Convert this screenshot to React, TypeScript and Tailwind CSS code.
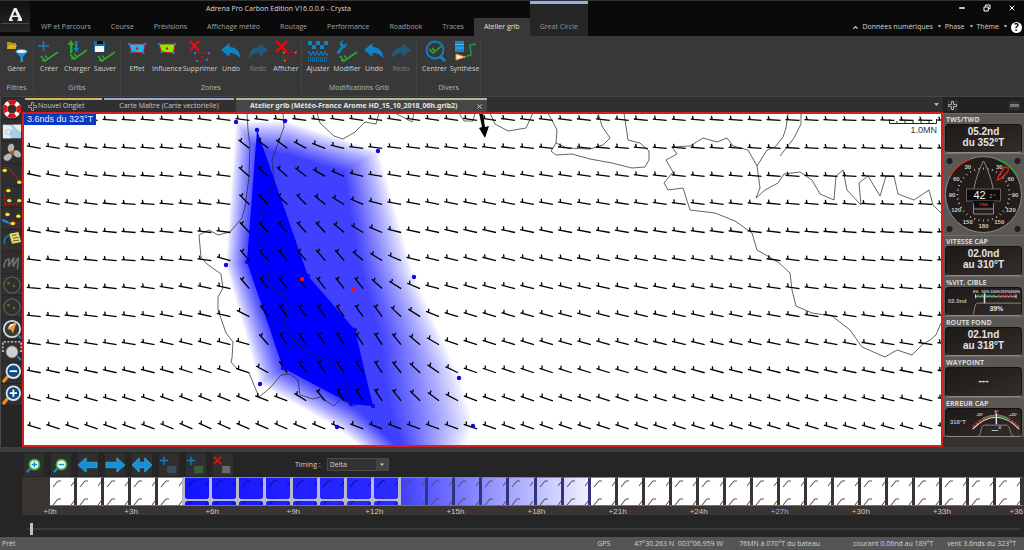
import React from "react";
import {ChevronUp, X, Minus} from "lucide-react";
import clsx from "clsx";

type Point = [number, number];

interface RibbonItem {
    label: string;
    icon: React.ReactNode;
    width: string;
    disabled?: boolean;
}

interface RibbonGroup {
    name: string;
    width: string;
    items: RibbonItem[];
}

const CheckMark = ({x = 0, y = 0}: { x?: number; y?: number }) => (
    <g transform={`translate(${x} ${y})`} fill="none" stroke="#2ea82e" strokeWidth="1.7">
        <path d="M0 4 L4 9 L17 0"/>
        <path d="M4 3.5 L7 7 M1 8.5 H5" strokeWidth="1.3"/>
    </g>
);

const Svg = ({children, size = "h-[22px] w-[22px]"}: { children: React.ReactNode; size?: string }) => (
    <svg viewBox="0 0 22 22" className={size}>{children}</svg>
);

const UndoIcon = ({flip = false}: { flip?: boolean }) => (
    <Svg>
        <g transform={flip ? "translate(22 0) scale(-1 1)" : undefined}>
            <path d="M1 10 L9.5 3 V7 C16 7 20 11 20.5 18.500 C17 14.5 14 13 9.5 13 V17 Z" fill="#0f82c8"/>
        </g>
    </Svg>
);

const ZoneIcon = ({fill}: { fill: string }) => (
    <Svg>
        <path d="M3 4 L19 4 L17.5 13 L5.5 12 Z" fill={fill} stroke="#c61c2c" strokeWidth="1"/>
        <circle cx="11" cy="8.5" r="1.2" fill="#e01010"/>
        {[[3, 4], [19, 4], [17.5, 13], [5.5, 12]].map(([x, y]) => (
            <circle key={x} cx={x} cy={y} r="1.2" fill="#1f7fc0"/>
        ))}
    </Svg>
);

const ribbonGroups: RibbonGroup[] = [
    {
        name: "Filtres", width: "w-[34px]", items: [
            {
                label: "Gérer", width: "w-[34px]", icon: (
                    <Svg>
                        <path d="M1 2 H5 L6 3 H10 V9 H1 Z" fill="#b8960c"/>
                        <path d="M1 9 L3 5 H11 L9 9 Z" fill="#d8b41c"/>
                        <path d="M10 12 L14.5 17 V22 H17 V17 L21 12 Z" fill="#2590d0"/>
                        <ellipse cx="15.5" cy="11.5" rx="5.5" ry="2" fill="#e8f4ff" stroke="#2590d0"/>
                    </Svg>
                ),
            },
        ],
    },
    {
        name: "Gribs", width: "w-[87px]", items: [
            {
                label: "Créer", width: "w-7", icon: (
                    <Svg>
                        <path d="M0 6 H11 M5.5 1 V11" stroke="#1280c4" strokeWidth="1.5"/>
                        <CheckMark x={3} y={12}/>
                    </Svg>
                ),
            },
            {
                label: "Charger", width: "w-7", icon: (
                    <Svg>
                        <path d="M4 13 V5 H1.5 L5 0 L8.5 5 H6.5 V13 Z" fill="#2ea82e"/>
                        <path d="M9 1 V8 H7.5 L10.5 13 L13 8 H11.5 V1 Z" fill="#1280c4"/>
                        <CheckMark x={4} y={10}/>
                    </Svg>
                ),
            },
            {
                label: "Sauver", width: "w-7", icon: (
                    <Svg>
                        <path d="M0 1 H9 L11 3 V12 H0 Z" fill="#1070b4"/>
                        <path d="M3 1 H9 V4 H3 Z" fill="#0a0a0a"/>
                        <path d="M1 6 H10 V12 H1 Z" fill="#f4f4f4"/>
                        <CheckMark x={4} y={12}/>
                    </Svg>
                ),
            },
        ],
    },
    {
        name: "Zones", width: "w-[181px]", items: [
            {label: "Effet", width: "w-[30px]", icon: <ZoneIcon fill="#22b4f0"/>},
            {label: "Influence", width: "w-[30px]", icon: <ZoneIcon fill="#7ef000"/>},
            {
                label: "Supprimer", width: "w-9", icon: (
                    <Svg>
                        <path d="M1 1 L10 11 M10 1 L1 11" stroke="#e80c10" strokeWidth="2"/>
                        <path d="M6 13 L20 13 L18 20 L8 21 Z" fill="none" stroke="#b01c2c" strokeDasharray="2 1"/>
                        {[[6, 13], [20, 13], [18, 20], [8, 21]].map(([x, y]) => (
                            <circle key={x} cx={x} cy={y} r="1.2" fill="#1f7fc0"/>
                        ))}
                        <circle cx="13" cy="17" r="1" fill="#e01010"/>
                    </Svg>
                ),
            },
            {label: "Undo", width: "w-[26px]", icon: <UndoIcon/>},
            {label: "Redo", width: "w-7", icon: <UndoIcon flip/>, disabled: true},
            {
                label: "Afficher", width: "w-7", icon: (
                    <Svg>
                        <path d="M1 1 L12 12 M12 1 L1 12" stroke="#e80c10" strokeWidth="2"/>
                        <path d="M9 12.5 H20.5 C21 17 16 20 10 20.5 L7.5 17 Z" fill="none" stroke="#a01824"/>
                        <path d="M8 12.5 h1.5 M20 12.5 h1.5 M9 20.5 h1.5" stroke="#e0a020" strokeWidth="1.5"/>
                    </Svg>
                ),
            },
        ],
    },
    {
        name: "Modifications Grib", width: "w-[115px]", items: [
            {
                label: "Ajuster", width: "w-[30px]", icon: (
                    <Svg>
                        <path
                            d="M1 1 h4 v4 h-4 z M9 1 h4 v4 h-4 z M17 1 h4 v4 h-4 z M5 5 h4 v4 h-4 z M13 5 h4 v4 h-4 z"
                            fill="#1280c4"
                        />
                        <path d="M1 12.5 H21" stroke="#1280c4" strokeWidth="2" strokeDasharray="2 2"/>
                        <path d="M3 14.5 H21" stroke="#1280c4" strokeWidth="2" strokeDasharray="2 2"/>
                        <path d="M1 18 H21 M1 20.5 H21" stroke="#1280c4" strokeWidth="1.5" strokeDasharray="1 1"/>
                    </Svg>
                ),
            },
            {
                label: "Modifier", width: "w-7", icon: (
                    <Svg>
                        <path d="M1.5 13.5 L7 6.5" stroke="#1280c4" strokeWidth="2.8"/>
                        <path d="M10.500 3 L8.500 5 L5.500 3.500 L7.500 .5 C4.500 .5 3 3 4 5.500 L6 8 C9 9 11.500 6.500 10.500 3 Z"
                              fill="#1280c4"/>
                        <CheckMark x={4} y={12}/>
                    </Svg>
                ),
            },
            {label: "Undo", width: "w-[26px]", icon: <UndoIcon/>},
            {label: "Redo", width: "w-7", icon: <UndoIcon flip/>, disabled: true},
        ],
    },
    {
        name: "Divers", width: "w-16", items: [
            {
                label: "Centrer", width: "w-8", icon: (
                    <Svg>
                        <circle cx="11" cy="10" r="8.5" fill="none" stroke="#1280c4" strokeWidth="1.8"/>
                        <path d="M16 16 L21 21" stroke="#1280c4" strokeWidth="3"/>
                        <path d="M5 9 L9 13 L17 6.5 M8 8 L11 11" fill="none" stroke="#2ea82e" strokeWidth="1.5"/>
                    </Svg>
                ),
            },
            {
                label: "Synthèse", width: "w-7", icon: (
                    <Svg>
                        <path d="M1 1 H10 V12 H1 Z" fill="#1288d4"/>
                        <path d="M1 4.5 H10 M1 8 H10" stroke="#8cc8ee" strokeWidth=".6"/>
                        <path d="M22 4 L16 5 L17 15 L10 17" fill="none" stroke="#1c9c48" strokeWidth="1.5"/>
                        <path d="M2 14 L11 17 L2 20 Z" fill="#f8ece0" stroke="#f08c28" strokeWidth="1"/>
                    </Svg>
                ),
            },
        ],
    },
];

const menuTabs = ["WP et Parcours", "Course", "Prévisions", "Affichage météo", "Routage", "Performance", "Roadbook", "Traces"];

const Caret = () => (
    <svg viewBox="0 0 6 6" className="ml-px h-[6px] w-[5px]"><path d="M1 1 H5 L3 3.5 Z" fill="#d6d6d6"/></svg>
);

const TitleBar = () => (
    <header className="flex h-9 shrink-0 border-t border-[#333] bg-[#0a0a0a]">
        <div className="flex h-[31px] w-[30px] items-center justify-center bg-linear-to-b from-[#111] to-[#2a2627]">
            <svg viewBox="0 0 30 31" className="h-full w-full">
                <path d="M14 7 H16.5 L22 18 V20 H17.5 V18.5 H18.5 L17.8 16 H12.5 L11.5 18.5 H13 V20 H9 V18.5 Z M15 10 L13 14.5 H17 Z"
                      fill="#f0f0f0" fillRule="evenodd"/>
                <path d="M1 22.5 H29" stroke="#4a4748"/>
            </svg>
        </div>
        <div className="flex flex-col justify-between">
            <h1 className="flex h-4 items-center pl-44 text-[#dcdcdc]">Adrena Pro Carbon Edition V16.0.0.6 - Crysta</h1>
            <nav className="flex pl-px">
                {menuTabs.map((tab) => (
                    <button key={tab} className="h-[18px] px-2.5 text-[#a2a2a2]">{tab}</button>
                ))}
                <button className="h-[18px] w-14 bg-[#383838] text-[#e0e0e0]">Atelier grib</button>
            </nav>
        </div>
        <button className="h-full w-[58px] border-t-3 border-[#8db0e6] bg-[#252525] pt-[14px] text-[#969696]">
            Great Circle
        </button>
        <div className="flex flex-1 flex-col justify-between">
            <div className="flex h-[11px] items-end justify-end gap-[17px] pr-2 text-white">
                <button aria-label="Réduire"><Minus size={8} strokeWidth={4}/></button>
                <button aria-label="Restaurer">
                    <svg viewBox="0 0 8 8" className="h-2 w-2" fill="none" stroke="currentColor">
                        <path d="M2.5 2.5 V1 H7 V4.5 H5.5 M1 3 H5.3 V7 H1 Z" strokeWidth="1"/>
                    </svg>
                </button>
                <button aria-label="Fermer"><X size={8} strokeWidth={3}/></button>
            </div>
            <div className="flex h-[18px] items-center justify-end gap-[3px] pr-[2px] text-[#d6d6d6]">
                <ChevronUp size={7} strokeWidth={4}/>
                <button>Données numériques</button>
                <Caret/>
                <button>Phase</button>
                <Caret/>
                <button>Thème</button>
                <Caret/>
                <button className="flex h-[11px] w-[11px] items-center justify-center rounded-full bg-white text-[10px] font-bold text-black">?
                </button>
            </div>
        </div>
    </header>
);

const Ribbon = () => (
    <div className="flex h-[61px] shrink-0 border-b border-[#444] bg-[#383838] py-[2px]">
        {ribbonGroups.map((group) => (
            <section key={group.name}
                     className={clsx("flex flex-col justify-between border-r border-[#454545]", group.width)}>
                <div className="flex justify-center pt-[2px]">
                    {group.items.map((item, i) => (
                        <button key={i} disabled={item.disabled}
                                className={clsx("flex flex-col items-center whitespace-nowrap", item.width, item.disabled && "opacity-45")}>
                            {item.icon}
                            <span className="flex h-[14px] items-center">{item.label}</span>
                        </button>
                    ))}
                </div>
                <p className="flex h-3 items-center justify-center pb-px text-[#b8b8b8]">{group.name}</p>
            </section>
        ))}
    </div>
);

const MagnifierIcon = ({sign}: { sign: string }) => (
    <Svg size="h-5 w-5">
        <path d="M1 21 L7 14" stroke="#f09020" strokeWidth="3.5"/>
        <circle cx="12.5" cy="9" r="7.5" fill="#0e4a80" stroke="#dfe6ea" strokeWidth="2"/>
        <path d={sign} stroke="#fff" strokeWidth="2"/>
    </Svg>
);

const DimRadar = () => (
    <Svg size="h-5 w-5">
        <circle cx="11" cy="11" r="9" fill="none" stroke="#5a5a5a" strokeWidth="1.5"/>
        <circle cx="7" cy="9" r="1.3" fill="#77702a"/>
        <circle cx="13" cy="12" r="1.3" fill="#77702a"/>
        <path d="M17 17 L21 21" stroke="#1c4c70" strokeWidth="2"/>
    </Svg>
);

const Buoy = ({x, y}: { x: number; y: number }) => (
    <g>
        <ellipse cx={x} cy={y} rx="2.5" ry="1.9" fill="#f0e814"/>
        <path d={`M${x - 1.5} ${y - 3} h3`} stroke="#b01828"/>
    </g>
);

const tools: { name: string; icon: React.ReactNode }[] = [
    {
        name: "Homme à la mer", icon: (
            <Svg size="h-5 w-5">
                <circle cx="11" cy="11" r="7.5" fill="none" stroke="#fff" strokeWidth="5"/>
                <circle cx="11" cy="11" r="7.5" fill="none" stroke="#e01010" strokeWidth="5"
                        strokeDasharray="7.78 4" strokeDashoffset="3.9"/>
            </Svg>
        ),
    },
    {
        name: "Carte", icon: (
            <Svg size="h-5 w-5">
                <path d="M1 4 H21 V19 H1 Z" fill="#a8cce4"/>
                <path d="M1 4 L9 5 L12 9 L8 12 L10 19 H1 Z M12 4 L21 4 V12 L15 8 Z" fill="#e8ecec"/>
                <circle cx="7" cy="12" r="3" fill="none" stroke="#a8c4d8"/>
            </Svg>
        ),
    },
    {
        name: "Moteur", icon: (
            <Svg size="h-5 w-5">
                <g fill="#b4b4b4">
                    <path d="M11 11 C5 10 5 3 9 1 C15 0 14 7 11 11 Z"/>
                    <path d="M11 11 C14 6 20 8 21 13 C21 18 14 16 11 11 Z"/>
                    <path d="M11 11 C12 17 7 21 3 19 C-1 15 5 11 11 11 Z"/>
                </g>
                <circle cx="11" cy="11" r="2.5" fill="#a4582c"/>
            </Svg>
        ),
    },
    {
        name: "Route", icon: (
            <Svg size="h-5 w-5">
                <path d="M2 3 H7 L19 18" fill="none" stroke="#c01828" strokeWidth="1.5" strokeDasharray="2 1"/>
                <Buoy x={3} y={6}/><Buoy x={19} y={19}/>
            </Svg>
        ),
    },
    {
        name: "Parcours", icon: (
            <Svg size="h-5 w-5">
                <path d="M3 20 V7 M3 19 H18" stroke="#c01828" strokeWidth="1.5" strokeDasharray="2 1"/>
                <Buoy x={7} y={4}/><Buoy x={8} y={15}/><Buoy x={19} y={15}/>
            </Svg>
        ),
    },
    {
        name: "Marques", icon: (
            <Svg size="h-5 w-5">
                <path d="M0 12 L12 17" stroke="#1888d0" strokeWidth="2.5"/>
                <ellipse cx="13" cy="17" rx="7" ry="3" fill="none" stroke="#901828"/>
                <Buoy x={6} y={6}/><Buoy x={18} y={8}/><Buoy x={12} y={16}/>
            </Svg>
        ),
    },
    {
        name: "Documents", icon: (
            <Svg size="h-5 w-5">
                <path d="M8 3 L18 1 L21 12 L11 14 Z" fill="#e4d870"/>
                <path d="M11 5 L16 4 M12 8 L18 7 M12 11 L19 10" stroke="#57521c"/>
                <path d="M8 5 C3 6 2 10 3 14" fill="none" stroke="#1888d0" strokeWidth="1.5"/>
                <path d="M3 16 L8 20" stroke="#a01828" strokeDasharray="2 1"/>
            </Svg>
        ),
    },
    {
        name: "Traces", icon: (
            <Svg size="h-5 w-5">
                <path d="M2 16 C3 8 6 6 8 7 L7 15 L13 5 L12 15 L18 5 L17 18" fill="none" stroke="#6c6c6c" strokeWidth="1.8"/>
            </Svg>
        ),
    },
    {name: "Zone A", icon: <DimRadar/>},
    {name: "Zone B", icon: <DimRadar/>},
    {
        name: "Boussole", icon: (
            <Svg size="h-5 w-5">
                <circle cx="11" cy="11" r="9" fill="#3a3a3a" stroke="#d8dcdc" strokeWidth="2"/>
                <path d="M16 4 L12 16 L10 12 L6 11 Z" fill="#f09a28"/>
                <path d="M16 4 L6 11 L9 6 Z" fill="#fff"/>
                <path d="M17 17 L21 21" stroke="#2088c8" strokeWidth="2"/>
            </Svg>
        ),
    },
    {
        name: "Sélection", icon: (
            <Svg size="h-5 w-5">
                <path d="M1 12 V1 H21 V12" fill="none" stroke="#eee" strokeWidth="1.5" strokeDasharray="2 2"/>
                <circle cx="11" cy="12" r="6.5" fill="#ccd0d0" stroke="#8c8c8c"/>
                <path d="M17 17 L21 21" stroke="#2088c8" strokeWidth="2"/>
            </Svg>
        ),
    },
    {name: "Zoom arrière", icon: <MagnifierIcon sign="M8.5 9 H16.5"/>},
    {name: "Zoom avant", icon: <MagnifierIcon sign="M8.5 9 H16.5 M12.5 5 V13"/>},
];

const ToolBar = () => (
    <aside className="flex w-[22px] shrink-0 flex-col gap-px border-l border-[#4a4a4a] bg-[#252525] pt-px">
        {tools.map((tool) => (
            <button key={tool.name} aria-label={tool.name}
                    className="flex h-[21px] w-full items-center justify-center bg-[#2f2f2f]">
                {tool.icon}
            </button>
        ))}
    </aside>
);

const outerZone: Point[] = [[236, 122], [285, 121], [378, 151], [414, 277], [459, 378], [473, 426], [455, 465], [400, 478], [337, 427], [260, 384], [226, 265]];
const midZone: Point[] = [[258, 150], [290, 156], [343, 173], [356, 255], [376, 330], [388, 412], [405, 455], [404, 452], [360, 410], [284, 366], [248, 262]];
const innerZone: Point[] = [[257, 130], [308, 276], [355, 330], [373, 406], [351, 404], [283, 368], [247, 262]];

const STEPS = 28;

const toPoints = (pts: Point[]) => pts.map((p) => p.join(",")).join(" ");

// nested polygons give the fade between the influence border and the effect zone
const zoneLayers = Array.from({length: STEPS}, (_, i) => {
    const t = (i + 1) / STEPS;
    const pts = outerZone.map(([x, y], k): Point => [
        x + (midZone[k][0] - x) * (i / STEPS),
        y + (midZone[k][1] - y) * (i / STEPS),
    ]);
    const c = Math.round(255 - 191 * Math.pow(t, 0.85));
    return {points: toPoints(pts), fill: `rgb(${c},${c},255)`};
});

const interpolate = (stops: Point[], v: number) => {
    if (v <= stops[0][0]) return stops[0][1];
    for (let i = 1; i < stops.length; i++) {
        const [a, fa] = stops[i - 1];
        const [b, fb] = stops[i];
        if (v <= b) return fa + ((fb - fa) * (v - a)) / (b - a);
    }
    return stops[stops.length - 1][1];
};

// edges of the influence zone at a given height
const leftOuter: Point[] = [[122, 232], [265, 222], [384, 258], [427, 335]];
const leftInner: Point[] = [[130, 240], [262, 234], [368, 275], [404, 330]];
const rightInner: Point[] = [[130, 268], [173, 290], [276, 348], [330, 385], [406, 385]];
const rightOuter: Point[] = [[121, 290], [151, 360], [277, 425], [378, 470], [426, 480]];

const rowAngles: [number, number, number][] = [
    [4, 8, 1], [10, 7, 2], [12, 10, 2], [12, 12, 3], [10, 13, 3], [7, 14, 4],
    [5, 15, 5], [6, 17, 7], [8, 18, 9], [11, 19, 11], [14, 19, 13], [17, 19, 15],
];

const barbs = rowAngles.flatMap(([l, m, r], row) =>
    Array.from({length: 49}, (_, col) => {
        const x = 40.7 + col * 18.97;
        const y = 120.3 + row * 28.05;
        const base = interpolate([[40, l], [140, row < 6 ? 4 : l + 2], [210, row < 6 ? 7 : l + 7], [480, m], [930, r]], x);
        const cx = x - 6;
        const lo = interpolate(leftOuter, y);
        const li = interpolate(leftInner, y);
        const ri = interpolate(rightInner, y);
        const ro = interpolate(rightOuter, y);
        const inside = row > 0 && row < 11 ? interpolate([[lo, 0], [li, 1], [ri, 1], [ro, 0]], cx) : 0;
        return {x, y, angle: base + (interpolate([[130, 36], [200, 44], [340, 56]], y) - base) * inside};
    }),
);

const coasts = [
    "M247 113 L248 130 L250 145 L249 177 L245 207 L242 218 L230 232 L218 235 L209 230 L199 235 L201 257 L207 264 L221 274 L223 288 L218 297 L218 310 L226 333 L233 342 L232 358 L231 362 L237 369 L249 373 L259 397 L270 388 L281 375 L290 374 L298 380 L300 395 L313 399 L320 397 L334 406 L341 399 L352 405 L357 405",
    "M283 113 L284 127 L272 160 L274 180 L263 210 L260 227 L259 243 L267 263 L269 283 L274 291 L284 293 L288 305 L284 323 L292 338 L303 349 L332 363 L345 374 L346 390 L352 405",
    "M317 113 L320 123 L334 136 L343 139 L355 132 L365 122 L376 124 L379 113",
    "M395 113 L412 122 L414 113",
    "M459 113 L464 121 L473 121 L475 113",
    "M490 113 L495 124 L508 131 L526 128 L533 113",
    "M548 113 L557 130 L556 143 L551 151 L556 155 L572 154 L590 159 L612 163 L632 168 L645 167 L649 160 L649 151 L640 143 L628 140 L624 113",
    "M556 143 L567 148 L590 149 L603 145 L610 138 L602 126 L598 113",
    "M788 113 L786 128 L783 137 L775 147 L767 150 L762 158 L757 166 L760 188 L756 198 L765 190 L778 183 L784 174 L800 172 L812 180 L820 194 L834 200 L836 176 L843 170 L847 190 L861 205 L859 183 L868 176 L880 196 L886 176 L894 176 L898 194 L914 200 L929 190 L933 205 L941 213",
    "M801 113 L801 124 L794 138 L780 156",
    "M757 166 L748 150 L733 146 L727 138 L717 142 L703 138 L690 146 L672 147 L677 154 L666 160 L673 172 L664 183 L668 190 L683 188 L690 210 L715 213 L735 221 L752 233 L757 250 L778 262 L790 273 L792 290 L796 306 L812 313 L832 316 L850 330 L862 347 L885 357 L897 350 L912 355 L922 345 L930 340 L936 335 L941 323",
];

const WindMap = () => (
    <div className="relative min-h-0 flex-1 border-2 border-[#d02020] bg-white">
        <svg viewBox="24 114 917 332" preserveAspectRatio="xMinYMin slice" className="h-full w-full">
            {zoneLayers.map((layer, i) => <polygon key={i} points={layer.points} fill={layer.fill}/>)}
            <polygon points={toPoints(innerZone)} fill="#0000ff"/>
            {coasts.map((d) => <path key={d} d={d} fill="none" stroke="#222" strokeWidth=".7"/>)}
            {barbs.map((b, i) => (
                <path key={i} d="M-14 0 H0 M-13 0 L-11.5 -.5 L-12.5 -3.5" fill="none" stroke="#000" strokeWidth="1.3"
                      transform={`translate(${b.x} ${b.y}) rotate(${b.angle})`}/>
            ))}
            {[...outerZone.filter(([, y]) => y < 440), ...innerZone].map(([x, y]) => (
                <circle key={`${x}-${y}`} cx={x} cy={y} r="2.2" fill="#0808e8"/>
            ))}
            <circle cx="302" cy="279" r="2.2" fill="#f01018"/>
            <circle cx="354" cy="289" r="2.2" fill="#f01018"/>
            <path d="M479 113 L483 113 L485 127 L489 126 L485 138 L479 128 L482 127 Z" fill="#000"/>
        </svg>
        <p className="absolute top-0 left-0 h-[11px] bg-[#0838c0] px-[3px] font-['Liberation_Sans',sans-serif] text-[9px] leading-[11px] text-[#eee]">
            3.6nds du 323°T
        </p>
        <div className="absolute top-[3px] right-1 font-['Liberation_Sans',sans-serif] text-[9px] leading-[11px] text-[#333]">
            <svg viewBox="0 0 48 8" className="h-2 w-12">
                <path d="M.5 2 V6.5 H47.5 V2 M8 6 V4 M16 6 V4 M24 6 V3 M32 6 V4 M40 6 V4" fill="none" stroke="#222"/>
            </svg>
            <p className="text-right">1.0MN</p>
        </div>
    </div>
);

const PlusCross = ({color}: { color: string }) => (
    <svg viewBox="0 0 9 9" className="h-[9px] w-[9px]" fill="none" stroke={color}>
        <path d="M3.5 .5 H5.5 V3.5 H8.5 V5.5 H5.5 V8.5 H3.5 V5.5 H.5 V3.5 H3.5 Z"/>
    </svg>
);

const DocumentTabs = () => (
    <div className="flex h-[15px] shrink-0 items-end gap-[2px] bg-[#303030] pl-[3px] text-[#c8c8c8]">
        <button className="flex h-[14px] w-[77px] items-center gap-px border-t-2 border-[#d8b460] bg-[#303030] pl-[3px]">
            <PlusCross color="#999"/>Nouvel Onglet
        </button>
        <button className="h-[14px] w-[130px] border-t-2 border-[#a0a8cc] bg-[#303030]">
            Carte Maître (Carte vectorielle)
        </button>
        <div className="flex h-[14px] w-[251px] items-center border-t-2 border-[#b0b89c] bg-[#464646] pl-[14px] font-['Noto_Sans',sans-serif] font-bold text-[#e4e4e4]">
            <button className="whitespace-nowrap">Atelier grib (Météo-France Arome HD_15_10_2018_06h.grib2)</button>
            <button aria-label="Fermer l'onglet" className="mr-1 ml-auto"><X size={7} strokeWidth={3}/></button>
        </div>
        <div className="flex h-full flex-1 items-center justify-end pr-[3px]">
            <svg viewBox="0 0 8 5" className="h-[5px] w-[7px]"><path d="M1 1 H7 L4 4 Z" fill="#c8c8c8"/></svg>
        </div>
    </div>
);

const Instrument = ({title, children}: { title: string; children: React.ReactNode }) => (
    <section className="flex min-h-0 flex-1 flex-col border-t border-[#6e6b69] px-[2px]">
        <h2 className="h-[10px] shrink-0 pl-px text-[7px] leading-[11px] font-bold text-[#d8d8d8]">{title}</h2>
        <div className="flex min-h-0 flex-1 flex-col items-center overflow-hidden rounded-[4px] border border-[#16110f] border-b-[#8a8886] bg-linear-to-br from-[#1d1918] to-[#332d2a]">
            {children}
        </div>
    </section>
);

const Reading = ({lines}: { lines: string[] }) => (
    <div className="flex flex-1 flex-col justify-center pb-[3px] text-center font-['Liberation_Sans',sans-serif] text-[10px] leading-[11px] font-bold text-[#e4e4e4]">
        {lines.map((line) => <p key={line}>{line}</p>)}
    </div>
);

const dialLabels = ["30", "60", "90", "120", "150", "180", "150", "120", "90", "60", "30"];

const WindDial = () => (
    <div className="flex h-[82px] shrink-0 justify-center border-t border-[#777]">
        <svg viewBox="0 0 80 81" className="h-full w-full font-['Liberation_Sans',sans-serif]">
            {[[6, 7], [74, 7], [6, 75], [74, 75]].map(([x, y]) => (
                <circle key={`${x}${y}`} cx={x} cy={y} r="3" fill="#1d2022"/>
            ))}
            <circle cx="40" cy="40.5" r="38" fill="#221d1b" stroke="#8b8886"/>
            <path d="M7 21 A38 38 0 0 1 27 5" fill="none" stroke="#c8342c" strokeWidth="1.5"/>
            <path d="M53 5 A38 38 0 0 1 73 21" fill="none" stroke="#22a04c" strokeWidth="1.5"/>
            {Array.from({length: 36}, (_, i) => i * 10).map((a) => (
                <path key={a} d="M40 13.5 V15.5" stroke="#bbb" strokeWidth=".9" transform={`rotate(${a} 40 40.5)`}/>
            ))}
            {dialLabels.map((label, i) => {
                const a = ((i + 1) * Math.PI) / 6;
                return (
                    <text key={i} x={40 + 31.5 * Math.sin(a)} y={42.5 - 31.5 * Math.cos(a)} fontSize="6" fontWeight="bold"
                          fill="#c8c8c8" textAnchor="middle">{label}</text>
                );
            })}
            <path d="M30 60 V47 C28 36 35 16 40 7 C45 16 52 36 50 47 V60 Z M30 55 H50" fill="none" stroke="#8c8885"/>
            <path d="M61 13 C65 13 66 15 64 18 L57 25 L54 26 L55 22 Z" fill="none" stroke="#e02818" strokeWidth="1.4"/>
            <rect x="23" y="35" width="34" height="12" fill="#0c0c0c" stroke="#66625f"/>
            <path d="M29 47 H51 L48 53 H32 Z" fill="#0c0c0c"/>
            <text x="36" y="45" fontSize="11" fill="#f0f0f0" textAnchor="middle">42</text>
            <text x="49" y="44" fontSize="5" fill="#aaa" textAnchor="middle">2 °</text>
            <text x="40" y="51.5" fontSize="4" fontWeight="bold" fill="#e02020" textAnchor="middle">TWA</text>
        </svg>
    </div>
);

const InstrumentPanel = () => (
    <aside className="flex w-[81px] shrink-0 flex-col bg-[#5a5755]">
        <div className="flex h-4 shrink-0 items-center justify-between bg-[#222] px-1">
            <button aria-label="Ajouter" className="bg-[#303030] p-px"><PlusCross color="#aaa"/></button>
            <button aria-label="Disposition" className="bg-[#303030]">
                <svg viewBox="0 0 11 9" className="h-[9px] w-[11px]" fill="none" stroke="#8c8c8c">
                    <path d="M1.5 3.5 h2 v2 h-2 z M4.5 3.5 h2 v2 h-2 z M7.5 3.5 h2 v2 h-2 z"/>
                </svg>
            </button>
        </div>
        <Instrument title="TWS/TWD"><Reading lines={["05.2nd", "du 352°T"]}/></Instrument>
        <WindDial/>
        <Instrument title="VITESSE CAP"><Reading lines={["02.0nd", "au 310°T"]}/></Instrument>
        <Instrument title="%VIT. CIBLE">
            <svg viewBox="0 0 76 27" className="h-full w-full font-['Liberation_Sans',sans-serif]" fontWeight="bold">
                <path d="M27 27 C29 27 28 15 32 15 H76" fill="none" stroke="#8a8684"/>
                <text x="2" y="15" fontSize="6" fill="#b8b8b8">02.0nd</text>
                <text x="51" y="23" fontSize="7" fill="#e4e4e4" textAnchor="middle">39%</text>
                {["0%", "50%", "100%", "150%", "200%"].map((t, i) => (
                    <text key={t} x={30 + i * 10} y="4.5" fontSize="4" fill="#ccc" textAnchor="middle">{t}</text>
                ))}
                <path d="M30 8.5 H71 M30 6 V10 M71 6 V10" stroke="#ddd"/>
                <path d="M31 7.5 H51" stroke="#22a04c" strokeWidth="2" strokeDasharray="3 1"/>
                <path d="M52 7.5 H70" stroke="#c8342c" strokeWidth="2" strokeDasharray="3 1"/>
                <path d="M39 5 V15" stroke="#e0e0e0" strokeWidth="1.5"/>
            </svg>
        </Instrument>
        <Instrument title="ROUTE FOND"><Reading lines={["02.1nd", "au 318°T"]}/></Instrument>
        <Instrument title="WAYPOINT"><Reading lines={["---"]}/></Instrument>
        <Instrument title="ERREUR CAP">
            <svg viewBox="0 0 76 27" className="h-full w-full font-['Liberation_Sans',sans-serif]" fontWeight="bold">
                <path d="M32 27 C37 27 34 16 39 16 H61 C66 16 64 27 69 27" fill="none" stroke="#8a8684"/>
                <text x="4" y="15" fontSize="6" fill="#b8b8b8">318°T</text>
                <path d="M27 20 Q51 -4 74 20" fill="none" stroke="#ddd" strokeWidth="1.2"/>
                <path d="M27 18 Q51 -6 74 18" fill="none" stroke="#c8342c" strokeWidth="2" strokeDasharray="3 1"/>
                <path d="M38 9.5 Q51 3 63 9.5" fill="none" stroke="#22a04c" strokeWidth="2" strokeDasharray="3 1"/>
                <path d="M51 4 V15" stroke="#e0e0e0" strokeWidth="1.5"/>
                <text x="34" y="7" fontSize="4" fill="#ccc" textAnchor="middle">-20°</text>
                <text x="51" y="4" fontSize="4" fill="#ccc" textAnchor="middle">0°</text>
                <text x="68" y="7" fontSize="4" fill="#ccc" textAnchor="middle">+20°</text>
                <text x="51" y="23" fontSize="7" fill="#e4e4e4" textAnchor="middle">---°</text>
            </svg>
        </Instrument>
        <div className="h-[10px] shrink-0 bg-[#36322f]"/>
    </aside>
);

const GreenLens = ({sign}: { sign: string }) => (
    <Svg size="h-5 w-5">
        <path d="M3 19 L8 14" stroke="#1888d0" strokeWidth="2.5"/>
        <circle cx="11.5" cy="10.5" r="5.5" fill="#f4f8f4" stroke="#3cae3c" strokeWidth="2"/>
        <path d={sign} stroke="#1888d0" strokeWidth="1.6"/>
    </Svg>
);

const AddZone = ({fill}: { fill: string }) => (
    <Svg size="h-5 w-5">
        <path d="M1 6 H10 M5.5 2 V11" stroke="#1280c4" strokeWidth="1.5"/>
        <path d="M9 12 H19 V20 H9 Z" fill={fill}/>
    </Svg>
);

const ARROW = "M0 11 L9 3 V8 H21 V14 H9 V19 Z";

const timelineTools: { name: string; icon: React.ReactNode }[] = [
    {name: "Agrandir", icon: <GreenLens sign="M8.5 10.5 H14.5 M11.5 7.5 V13.5"/>},
    {name: "Réduire l'échelle", icon: <GreenLens sign="M8.5 10.5 H14.5"/>},
    {name: "Précédent", icon: <Svg size="h-5 w-5"><path d={ARROW} fill="#1490d8" stroke="#50c0ee" strokeWidth=".6"/></Svg>},
    {
        name: "Suivant", icon: (
            <Svg size="h-5 w-5">
                <path d={ARROW} fill="#1490d8" stroke="#50c0ee" strokeWidth=".6" transform="translate(22 0) scale(-1 1)"/>
            </Svg>
        ),
    },
    {
        name: "Étendre", icon: (
            <Svg size="h-5 w-5">
                <path d="M0 11 L8 3 V8 H14 V3 L22 11 L14 19 V14 H8 V19 Z" fill="#1490d8" stroke="#50c0ee"
                      strokeWidth=".6"/>
            </Svg>
        ),
    },
    {name: "Ajouter une zone d'effet", icon: <AddZone fill="#3c4e5c"/>},
    {name: "Ajouter une zone d'influence", icon: <AddZone fill="#3c5c3a"/>},
    {
        name: "Supprimer la zone", icon: (
            <Svg size="h-5 w-5">
                <path d="M1 2 L9 10 M9 2 L1 10" stroke="#d81418" strokeWidth="1.8"/>
                <path d="M10 12 H19 V20 H10 Z" fill="#686868"/>
            </Svg>
        ),
    },
];

const cellStyle = (i: number) => {
    if (i < 5 || i > 19) return undefined;
    const c = i < 13 ? 20 + (i - 5) * 3 : 64 + (i - 13) * 25;
    const next = i < 13 ? c + 3 : c + 25;
    return {backgroundImage: `linear-gradient(to right, rgb(${c},${c},255), rgb(${next},${next},255))`};
};

const TimeCell = ({index}: { index: number }) => {
    const active = index >= 5 && index < 13;
    const fading = index >= 13 && index < 20;
    return (
        <div style={cellStyle(index)}
             className={clsx("h-[28px] border-t border-t-[#888] border-r-3 bg-white", active && "border-r-[#b8b8cc]", fading && "border-r-[#33337c]", !active && !fading && (index === 4 ? "border-r-[#b8b8cc]" : "border-r-[#3a3532]"))}>
            <svg viewBox="0 0 24 27" preserveAspectRatio="none" className="block h-full w-full" fill="none">
                <path d="M3 9 L8 3 H11 M3 27 L8 21 H11 M21 8 L24 4 M21 27 L24 23" stroke={active ? "#101080" : "#555"}/>
                {active && (
                    <>
                        <path d="M0 22 H24" stroke="#b8b8cc" strokeWidth="2"/>
                        <path d="M0 19.5 L2.5 22 L0 24.5 Z M24 19.5 L21.5 22 L24 24.5 Z" fill="#c4c4cc"/>
                    </>
                )}
            </svg>
        </div>
    );
};

const Timeline = () => (
    <section className="shrink-0 border-t-5 border-[#3e3e3e] bg-[#252525] pl-[22px]">
        <div className="flex h-[25px] items-center gap-[7px] pl-[2px]">
            {timelineTools.map((tool) => (
                <button key={tool.name} aria-label={tool.name}
                        className="flex h-[23px] w-5 items-center justify-center bg-[#2f2f2f]">
                    {tool.icon}
                </button>
            ))}
            <label htmlFor="timing" className="ml-[55px] text-[#d0d0d0]">Timing :</label>
            <div className="relative -ml-px">
                <select id="timing"
                        className="block h-[13px] w-[62px] appearance-none border border-[#4a4a4a] bg-[#333] pl-[2px] text-[7px] leading-[11px] text-[#d8d8d8]">
                    <option>Delta</option>
                </select>
                <svg viewBox="0 0 12 11" className="pointer-events-none absolute top-px right-px h-[11px] w-3">
                    <path d="M0 0 H12 V11 H0 Z" fill="#444"/>
                    <path d="M4 4.5 H8 L6 7 Z" fill="#c8c8c8"/>
                </svg>
            </div>
        </div>
        <div className="bg-[#3a3532] pr-px pl-7">
            <div className="grid grid-cols-[repeat(36,minmax(0,1fr))]">
                {Array.from({length: 36}, (_, i) => <TimeCell key={i} index={i}/>)}
            </div>
            <div className="grid h-[10px] grid-cols-12 border-t border-[#77726e] font-['Liberation_Sans',sans-serif] text-[8px] leading-[11px] text-[#c8c8c8]">
                {Array.from({length: 12}, (_, i) => (
                    <div key={i} className="flex justify-between">
                        <span className={clsx("flex w-0 justify-center whitespace-nowrap", i === 9 && "text-[#a8a8e8]")}>
                            +{i * 3}h
                        </span>
                        {i === 11 && <span>+36</span>}
                    </div>
                ))}
            </div>
        </div>
        <div className="flex h-[22px] items-center pt-[6px] pr-1 pl-[5px]">
            <input type="range" aria-label="Heure" min={0} max={1000} defaultValue={3}
                   className="h-3 w-full appearance-none bg-transparent [&::-webkit-slider-runnable-track]:h-[2px] [&::-webkit-slider-runnable-track]:bg-[#3a3a3a] [&::-webkit-slider-thumb]:-mt-[5px] [&::-webkit-slider-thumb]:h-3 [&::-webkit-slider-thumb]:w-[3px] [&::-webkit-slider-thumb]:appearance-none [&::-webkit-slider-thumb]:bg-[#c0c0c0]"/>
        </div>
    </section>
);

const StatusBar = () => (
    <footer className="flex h-[13px] shrink-0 items-center bg-[#555] pr-2 pl-[2px] whitespace-pre text-[#d4d4d4]">
        <span className="flex-1">Prêt</span>
        <span className="w-[37px]">GPS</span>
        <span className="w-[105px]">47°30.263 N  003°06.959 W</span>
        <span className="w-[114px]">76MN à 070°T du bateau</span>
        <span className="w-[94px]">courant 0.06nd au 189°T</span>
        <span>vent 3.6nds du 323°T</span>
    </footer>
);

const App: React.FC = () => {
    return (
        <div className="flex h-screen flex-col overflow-hidden bg-[#252525] font-['Open_Sans','Noto_Sans',sans-serif] text-[7px] leading-[10px] text-[#d0d0d0]">
            <TitleBar/>
            <Ribbon/>
            <main className="flex min-h-0 flex-1">
                <ToolBar/>
                <div className="flex min-w-0 flex-1 flex-col">
                    <DocumentTabs/>
                    <WindMap/>
                </div>
                <InstrumentPanel/>
            </main>
            <Timeline/>
            <StatusBar/>
        </div>
    );
};

export default App;
